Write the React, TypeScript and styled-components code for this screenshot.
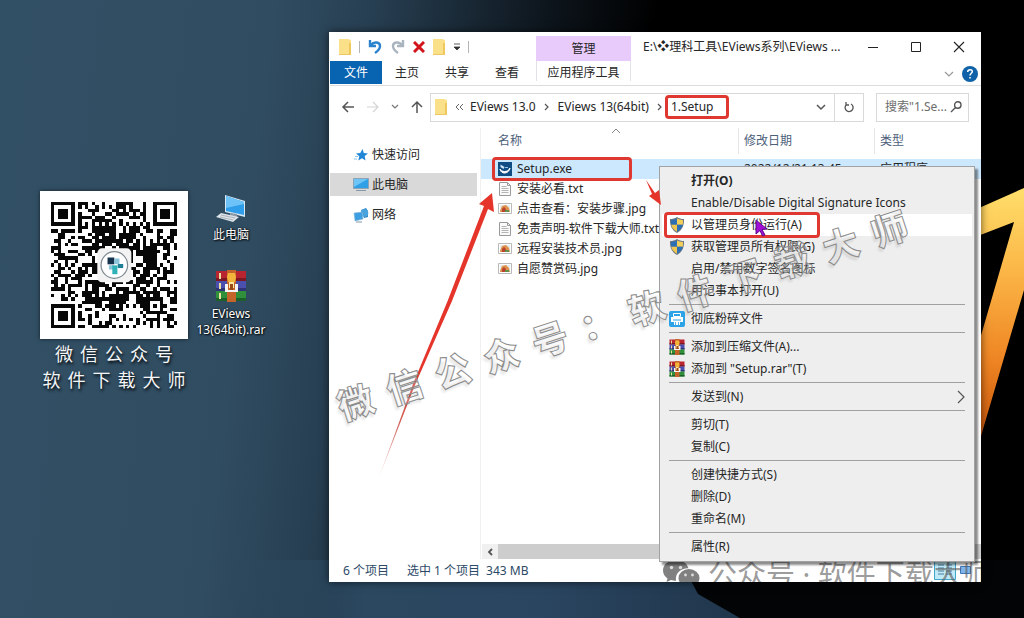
import React from "react";
import styled, { createGlobalStyle, css } from "styled-components";

const GlobalStyle = createGlobalStyle`
  * { box-sizing: border-box; }
  html, body, #root { height: 100%; }
  body {
    margin: 0;
    overflow: hidden;
    background: #000;
    font-family: "Noto Sans", "Noto Sans CJK SC", sans-serif;
    font-size: 12px;
    line-height: 16px;
    color: #262626;
  }
  button, input { font: inherit; color: inherit; }
  button { border: 0; padding: 0; background: none; text-align: left; }
`;

/* ---------- desktop ---------- */

const Desktop = styled.main`
  position: relative;
  height: 100vh;
  min-height: 600px;
  overflow: hidden;
  background: linear-gradient(97deg, #325065 0%, #304c61 25%, #273f52 34%, #0d151c 50%, #000 60%);
`;

const Wallpaper = styled.svg`
  position: absolute;
  inset: 0;
  width: 100%;
  height: 100%;
`;

const QrCard = styled.figure`
  position: absolute;
  left: 40px;
  top: 191px;
  width: 148px;
  margin: 0;
  display: flex;
  flex-direction: column;
  align-items: center;
  gap: 2px;
`;

const QrPaper = styled.div`
  padding: 11px;
  background: #fff;
  box-shadow: 0 0 4px rgba(0, 0, 0, 0.6);
  svg { display: block; width: 126px; height: 126px; }
`;

const Caption = styled.figcaption`
  display: flex;
  flex-direction: column;
  align-items: center;
  gap: 2px;
  font-family: "Noto Sans CJK SC", sans-serif;
  font-size: 18px;
  line-height: 24px;
  font-weight: 400;
  color: #f4f6f8;
  text-shadow: 1px 2px 3px #000;
`;

const Spread = styled.div<{ $gap: number }>`
  display: flex;
  gap: ${(p) => p.$gap}px;
`;

const Shortcut = styled.button<{ $top: number }>`
  position: absolute;
  left: 192px;
  top: ${(p) => p.$top}px;
  width: 78px;
  display: flex;
  flex-direction: column;
  align-items: center;
  gap: 4px;
  text-align: center;
  color: #fff;
  text-shadow: 1px 1px 2px #000, 0 0 2px #000;
`;

/* ---------- explorer window ---------- */

const Window = styled.section`
  position: absolute;
  left: 329px;
  right: 43px;
  top: 32px;
  bottom: 36px;
  display: flex;
  flex-direction: column;
  padding-left: 1px;
  background: #fff;
  box-shadow: 0 0 8px rgba(0, 0, 0, 0.6);
`;

const Ribbon = styled.header`
  display: flex;
  height: 54px;
  flex: none;
  border-bottom: 1px solid #dcdcdc;
`;

const RibbonLeft = styled.div`
  width: 206px;
  display: flex;
  flex-direction: column;
`;

const QuickBar = styled.div`
  height: 29px;
  display: flex;
  align-items: center;
  padding-left: 8px;
  gap: 7px;
  svg { display: block; }
`;

const Divider = styled.span`
  width: 1px;
  height: 12px;
  background: #b4b4b4;
`;

const Tabs = styled.nav`
  display: flex;
`;

const Tab = styled.button<{ $active?: boolean }>`
  width: ${(p) => (p.$active ? 52 : 50)}px;
  height: 23px;
  text-align: center;
  ${(p) => p.$active && css`background: #0863b1; color: #fff;`}
`;

const ToolTab = styled.div`
  width: 95px;
  display: flex;
  flex-direction: column;
  padding-top: 4px;
  text-align: center;
`;

const ToolGroup = styled.div`
  height: 25px;
  line-height: 25px;
  background: #e8cafb;
`;

const ToolName = styled.button`
  height: 20px;
  text-align: center;
  line-height: 24px;
  border: solid #e4e0e8;
  border-width: 0 1px;
`;

const RibbonRight = styled.div`
  flex: 1;
  display: flex;
  flex-direction: column;
`;

const TitleRow = styled.div`
  height: 30px;
  display: flex;
  align-items: center;
  justify-content: space-between;
  padding: 0 16px 0 12px;
`;

const WindowButtons = styled.div`
  display: flex;
  gap: 31px;
  svg { display: block; }
`;

const HelpRow = styled.div`
  display: flex;
  align-items: center;
  justify-content: flex-end;
  gap: 8px;
  padding: 4px 3px 0 0;
  svg { display: block; }
`;

const AddressRow = styled.div`
  flex: none;
  display: flex;
  align-items: center;
  height: 42px;
  padding: 0 12px 0 11px;
  svg { display: block; }
`;

const NavButtons = styled.div`
  width: 89px;
  display: flex;
  align-items: center;
  justify-content: space-between;
  padding-right: 6px;
`;

const Address = styled.div`
  flex: 1;
  height: 29px;
  display: flex;
  align-items: center;
  border: 1px solid #d9d9d9;
  padding-left: 3px;
`;

const Crumb = styled.a`
  position: relative;
  color: inherit;
  text-decoration: none;
  white-space: nowrap;
`;

const CrumbArrow = styled.span`
  width: 22px;
  display: flex;
  justify-content: center;
`;

const Spacer = styled.span`
  flex: 1;
`;

const Refresh = styled.button`
  width: 29px;
  height: 27px;
  margin-left: 8px;
  border-left: 1px solid #d9d9d9;
  display: flex;
  align-items: center;
  justify-content: center;
`;

const Search = styled.label`
  width: 93px;
  height: 29px;
  margin-left: 12px;
  display: flex;
  align-items: center;
  justify-content: space-between;
  border: 1px solid #d9d9d9;
  padding: 0 6px 0 8px;
  color: #6d6d6d;
`;

const SearchInput = styled.input`
  width: 64px;
  border: 0;
  padding: 0;
  outline: 0;
  background: none;
  &::placeholder { color: #6d6d6d; opacity: 1; }
`;

const Body = styled.div`
  flex: 1;
  min-height: 0;
  display: flex;
`;

const Sidebar = styled.nav`
  width: 151px;
  flex: none;
  display: flex;
  flex-direction: column;
  gap: 7px;
  padding: 15px 3px 0 0;
  border-right: 1px solid #f0f0f0;
`;

const Place = styled.button<{ $current?: boolean }>`
  height: 23px;
  display: flex;
  align-items: center;
  gap: 3px;
  padding-left: 23px;
  background: ${(p) => (p.$current ? "#d9d9d9" : "transparent")};
`;

const Listing = styled.div`
  position: relative;
  flex: 1;
  min-width: 0;
  display: flex;
  flex-direction: column;
  justify-content: space-between;
`;

const Files = styled.table`
  width: 100%;
  table-layout: fixed;
  border-collapse: collapse;
  th {
    height: 31px;
    padding: 0 0 10px 6px;
    vertical-align: bottom;
    font-weight: 400;
    text-align: left;
    color: #4c607a;
    background: linear-gradient(#e5e5e5, #e5e5e5) left 0 top 0 / 1px 26px no-repeat;
  }
  th:first-child { padding-left: 17px; background: none; }
  td { height: 20px; padding: 0 0 0 6px; white-space: nowrap; }
  td:first-child { padding-left: 17px; }
`;

const FileRow = styled.tr<{ $selected?: boolean }>`
  background: ${(p) => (p.$selected ? "#cce8ff" : "transparent")};
`;

const FileName = styled.span`
  position: relative;
  display: flex;
  align-items: center;
  gap: 5px;
  svg { display: block; flex: none; }
`;

const SortMark = styled.svg`
  position: absolute;
  left: 130px;
  top: 0;
`;

const ScrollBar = styled.div`
  display: flex;
  align-items: center;
  height: 15px;
  margin-left: 1px;
  background: #cdcdcd;
`;

const ScrollArrow = styled.button`
  width: 16px;
  height: 15px;
  background: #f0f0f0;
  display: flex;
  align-items: center;
  justify-content: center;
`;

const Status = styled.footer`
  position: relative;
  flex: none;
  height: 23px;
  display: flex;
  align-items: center;
  padding: 0 9px 0 13px;
  color: #2c4a66;
  overflow: hidden;
`;

const StatusItem = styled.span<{ $gap: number }>`
  margin-right: ${(p) => p.$gap}px;
`;

/* ---------- context menu ---------- */

const Menu = styled.div`
  position: absolute;
  left: 330px;
  top: 134px;
  width: 316px;
  padding: 3px 2px;
  background: #eee;
  border: 1px solid #a2a2a2;
  box-shadow: 3px 3px 2px rgba(0, 0, 0, 0.45);
`;

const MenuItem = styled.button<{ $hover?: boolean; $bold?: boolean }>`
  position: relative;
  width: 100%;
  height: 22px;
  display: flex;
  align-items: center;
  padding: 0 6px 0 7px;
  background: ${(p) => (p.$hover ? "#fff" : "transparent")};
  font-weight: ${(p) => (p.$bold ? 700 : 400)};
  svg { display: block; }
`;

const MenuIcon = styled.span`
  width: 22px;
`;

const MenuLine = styled.hr`
  height: 1px;
  margin: 2px 7px 3px;
  border: 0;
  background: #a0a0a0;
`;

/* ---------- annotations ---------- */

const Mark = styled.span<{ $inset: string }>`
  position: absolute;
  inset: ${(p) => p.$inset};
  border: 3px solid #df3830;
  border-radius: 4px;
  pointer-events: none;
`;

const Arrows = styled.svg`
  position: absolute;
  left: 0;
  top: 0;
  pointer-events: none;
`;

const Pointer = styled.svg`
  position: absolute;
  left: 93px;
  top: 5px;
`;

const Stamp = styled.div`
  position: absolute;
  left: 8px;
  top: 349px;
  display: flex;
  gap: 15px;
  transform: rotate(-18deg);
  transform-origin: 19px 19px;
  font-family: "Noto Sans CJK SC", sans-serif;
  font-weight: 900;
  font-size: 36px;
  line-height: 38px;
  color: rgba(255, 255, 255, 0.2);
  -webkit-text-stroke: 1px #8c8c8c;
  text-shadow: -3px 3px 2px rgba(0, 0, 0, 0.08);
  pointer-events: none;
`;

const Channel = styled.div`
  position: absolute;
  left: 332px;
  top: 1px;
  height: 28px;
  display: flex;
  align-items: center;
  gap: 8px;
  white-space: pre;
  font-size: 29px;
  line-height: 28px;
  color: rgba(90, 90, 90, 0.62);
`;

const ViewIcons = styled.svg`
  display: block;
`;

/* ---------- drawings ---------- */

const QR = 37;

function qrPath(): string {
  let seed = 20231;
  const rnd = () => {
    seed = (seed * 1103515245 + 12345) & 0x7fffffff;
    return (seed >> 8) / 0x7fffff;
  };
  const dense = [[15, 9, 4], [22, 11, 3], [12, 26, 4], [19, 29, 3], [28, 15, 3]];
  let d = "";
  for (let y = 0; y < QR; y++) {
    for (let x = 0; x < QR; x++) {
      const r = rnd();
      const cornerX = x < 8 ? 0 : x > 28 ? 30 : -1;
      const cornerY = y < 8 ? 0 : y > 28 ? 30 : -1;
      let on = r < 0.48;
      if (dense.some(([cx, cy, s]) => Math.hypot(x - cx, y - cy) < s)) on = r < 0.82;
      if (cornerX >= 0 && cornerY >= 0 && !(cornerX === 30 && cornerY === 30)) {
        const ring = Math.max(Math.abs(x - cornerX - 3), Math.abs(y - cornerY - 3));
        on = ring === 3 || ring < 2;
      } else if (Math.abs(x - 30) < 3 && Math.abs(y - 30) < 3) {
        const ring = Math.max(Math.abs(x - 30), Math.abs(y - 30));
        on = ring !== 1;
      } else if (x === 6 || y === 6) {
        on = (x + y) % 2 === 0;
      }
      if (Math.abs(x - 18) < 5 && Math.abs(y - 18) < 5) on = false;
      if (on) d += `M${x} ${y}h1v1h-1z`;
    }
  }
  return d;
}

const QrCode = () => (
  <svg viewBox="0 0 37 37" role="img" aria-label="QR">
    <path d={qrPath()} shapeRendering="crispEdges" fill="#080808" />
    <rect x="13.6" y="13.6" width="10" height="10" rx="1.4" fill="#f3f3f3" />
    <circle cx="18.6" cy="18.5" r="3.9" fill="#fff" stroke="#7d8a90" strokeWidth=".35" />
    <path d="M16.6 16.3h2v2h-2z" fill="#17344f" />
    <path d="M18.6 16.6h1.5v1.6h-1.5zM17 18.6h1.4v1.2H17z" fill="#8ac5dc" />
    <path d="M18 18.6h1.5v2.6H18z" fill="#2fb3b8" />
    <path d="M19.6 18.2h1.6v1.2h-1.6z" fill="#1e7f95" />
  </svg>
);

const Folder = () => (
  <svg width="14" height="16" viewBox="0 0 14 16">
    <path d="M1 0h9l3 1v15H1z" fill="#fbe08a" />
    <path d="M11 4h2v12h-2z" fill="#eec75d" />
    <path d="M1 15h12v1H1z" fill="#ecc763" />
  </svg>
);

const Rar = ({ size }: { size: number }) => (
  <svg width={size} height={size} viewBox="0 0 32 32">
    <path d="M1 1h30v10H1z" fill="#b8242f" />
    <path d="M1 8h30v3H1z" fill="#7d1822" />
    <path d="M1 11h30v10H1z" fill="#4b4fae" />
    <path d="M1 18h30v3H1z" fill="#313378" />
    <path d="M1 21h30v10H1z" fill="#2f8f3b" />
    <path d="M1 28h30v3H1z" fill="#1c6127" />
    <path d="M4 3h2v6H4zM4 13h2v6H4zM4 23h2v6H4z" fill="#e9dfa0" />
    <path d="M12 0h9v32h-9z" fill="#c4642a" />
    <path d="M13 3h7l1 4-1 5h-7l-1-5z" fill="#f2b43a" />
    <path d="M14 12h5v6h-5z" fill="#ffe9a0" />
    <path d="M10 14h3v6h7v-6h3v8H10z" fill="#f4f4f4" />
    <path d="M15 14h3v6h-3z" fill="#9a4a18" />
  </svg>
);

const DesktopPc = () => (
  <svg width="32" height="28" viewBox="0 0 32 28">
    <path d="M10 0l20 6v16l-20-5z" fill="#d5e8f4" />
    <path d="M11 1l18 6v13l-18-4z" fill="#2f9eea" />
    <path d="M11 1l18 6v2L11 13z" fill="#6dc2f8" />
    <path d="M15 18l7 1v3l-7-1z" fill="#8c9aa5" />
    <path d="M6 18l18 4-6 5L1 22z" fill="#dde3e8" />
    <path d="M6 20l14 3M5 22l13 3" stroke="#9aa7b0" strokeWidth=".8" />
  </svg>
);

const Shield = () => (
  <svg width="16" height="16" viewBox="0 0 16 16">
    <path d="M8 0c2 1.500 4.500 2 7 2 .3 6-1.500 11-7 14C2.500 13 .7 8 1 2c2.500 0 5-.5 7-2z" fill="#6b7683" />
    <path d="M8 1.600v6.200H2.200C2 6 2 4.500 2.100 3 4.400 2.900 6.400 2.500 8 1.600z" fill="#2c6fb4" />
    <path d="M8 1.600c1.600.9 3.600 1.300 5.900 1.400.1 1.500.1 3-.1 4.800H8z" fill="#f4cf5a" />
    <path d="M2.200 7.800H8v6.900c-3.400-1.900-5.200-4-5.800-6.900z" fill="#f0c64e" />
    <path d="M13.800 7.800H8v6.900c3.400-1.900 5.200-4 5.800-6.900z" fill="#2c6fb4" />
  </svg>
);

const Shredder = () => (
  <svg width="16" height="16" viewBox="0 0 16 16">
    <rect width="16" height="16" rx="2" fill="#2ba3e6" />
    <path d="M4.500 2.500h7v3h-7z" fill="none" stroke="#fff" />
    <path d="M2 6h12v5H2z" fill="#fff" />
    <path d="M4 8.500h8v1H4z" fill="#2ba3e6" />
    <path d="M5 10h6v4H5z" fill="#fff" />
    <path d="M6.500 11v3M9.500 11v3" stroke="#2ba3e6" strokeWidth=".8" />
  </svg>
);

const SetupIcon = () => (
  <svg width="14" height="14" viewBox="0 0 14 14">
    <path d="M0 0h14v14H0z" fill="#0f4c84" />
    <path d="M2 7c1 3 8 4 10-1-1 6-9 7-10 1z" fill="#fff" stroke="#fff" />
    <path d="M2.500 2.500l4 2.500-1 2-3-2z" fill="#cfe6f7" />
    <path d="M7 5h3v1H7z" fill="#8fc3e8" />
  </svg>
);

const TextIcon = () => (
  <svg width="14" height="14" viewBox="0 0 14 14">
    <path d="M1.500.5h8l3 3v10h-11z" fill="#fafafa" stroke="#9a9a9a" />
    <path d="M9.500.5v3h3" fill="none" stroke="#9a9a9a" />
    <path d="M3.500 4.500h5M3.500 6.500h7M3.500 8.500h7M3.500 10.500h7" stroke="#b4b4b4" />
  </svg>
);

const ImageIcon = () => (
  <svg width="14" height="14" viewBox="0 0 14 14">
    <path d="M.5 1.500h13v10H.5z" fill="#fff" stroke="#b9b9b9" />
    <path d="M2 3h10v7H2z" fill="#e4edf0" />
    <path d="M2 9l2-5 4-1 3 3 1 4H2z" fill="#e0914e" />
    <path d="M4 7l2-2 2 2v3H4z" fill="#b8432f" />
    <path d="M7 8h4v2H7z" fill="#62904a" />
  </svg>
);

const Star = () => (
  <svg width="16" height="16" viewBox="0 0 16 16">
    <path d="M9.500 2l1.300 4 4.200.4-3.300 2.700.8 4.400-3.500-2.300-3.700 2.300 1-4.200L3 6.500l4.300-.4z" fill="#1f87d6" />
    <path d="M2 9.500h3M1 12h3" stroke="#8ec3ea" />
  </svg>
);

const SmallPc = () => (
  <svg width="16" height="16" viewBox="0 0 16 16">
    <path d="M.5 1.500h15v10H.5z" fill="#2f9fe6" stroke="#8ba3b4" />
    <path d="M1 2h14L1 10z" fill="#6cc4f7" />
    <path d="M3 13h10v1H3z" fill="#8799a6" />
  </svg>
);

const Network = () => (
  <svg width="16" height="16" viewBox="0 0 16 16">
    <path d="M8 3l5-2 2 3v6l-4 1z" fill="#2e86c9" />
    <circle cx="11.500" cy="6" r="3.800" fill="#4ba3dd" />
    <path d="M1 6l8-1 1 7-8 2z" fill="#3d9fe2" stroke="#8cb7d6" strokeWidth=".6" />
    <path d="M3 14.500h6v1H3z" fill="#8799a6" />
  </svg>
);

type StrokeProps = { w: number; h: number; d: string; color?: string; width?: number };
const Line = ({ w, h, d, color = "#555", width = 1.2 }: StrokeProps) => (
  <svg width={w} height={h} viewBox={`0 0 ${w} ${h}`} fill="none" stroke={color} strokeWidth={width}>
    <path d={d} />
  </svg>
);

const WeChat = () => (
  <svg width="38" height="30" viewBox="0 0 38 30">
    <path d="M14 1C6.500 1 1 5.500 1 11.500c0 3.300 1.700 6 4.500 8L4.500 23l4.500-2c1.500.5 3 .8 5 .8C13 14 19 9 26.500 9.300 25 4 20 1 14 1z" fill="#808080" />
    <ellipse cx="27" cy="19" rx="10.500" ry="9" fill="#808080" />
    <path d="M31 26l3 3-6-1z" fill="#808080" />
    <g fill="#ddd">
      <circle cx="9.500" cy="8.500" r="1.700" />
      <circle cx="18.500" cy="8.500" r="1.700" />
      <circle cx="23.500" cy="16" r="1.400" />
      <circle cx="30.500" cy="16" r="1.400" />
    </g>
  </svg>
);

/* ---------- data ---------- */

type Entry = { name: string; icon: React.ReactNode; date?: string; type?: string };
const files: Entry[] = [
  { name: "Setup.exe", icon: <SetupIcon />, date: "2022/12/21 13:45", type: "应用程序" },
  { name: "安装必看.txt", icon: <TextIcon /> },
  { name: "点击查看：安装步骤.jpg", icon: <ImageIcon /> },
  { name: "免责声明-软件下载大师.txt", icon: <TextIcon /> },
  { name: "远程安装技术员.jpg", icon: <ImageIcon /> },
  { name: "自愿赞赏码.jpg", icon: <ImageIcon /> },
];

type Action = { label: string; icon?: React.ReactNode; bold?: boolean; hover?: boolean; sub?: boolean };
const menu: Action[][] = [
  [
    { label: "打开(O)", bold: true },
    { label: "Enable/Disable Digital Signature Icons" },
    { label: "以管理员身份运行(A)", icon: <Shield />, hover: true },
    { label: "获取管理员所有权限(G)", icon: <Shield /> },
    { label: "启用/禁用数字签名图标" },
    { label: "用记事本打开(U)" },
  ],
  [{ label: "彻底粉碎文件", icon: <Shredder /> }],
  [
    { label: "添加到压缩文件(A)...", icon: <Rar size={16} /> },
    { label: '添加到 "Setup.rar"(T)', icon: <Rar size={16} /> },
  ],
  [{ label: "发送到(N)", sub: true }],
  [{ label: "剪切(T)" }, { label: "复制(C)" }],
  [{ label: "创建快捷方式(S)" }, { label: "删除(D)" }, { label: "重命名(M)" }],
  [{ label: "属性(R)" }],
];

const Letters = ({ text, gap }: { text: string; gap: number }) => (
  <Spread $gap={gap}>
    {[...text].map((c, i) => (
      <span key={i}>{c}</span>
    ))}
  </Spread>
);

export default function App() {
  return (
    <>
      <GlobalStyle />
      <Desktop>
        <Wallpaper viewBox="0 0 1024 618" preserveAspectRatio="xMaxYMax slice">
          <defs>
            <linearGradient id="gold" x1="0" y1="0" x2="0" y2="1">
              <stop offset="0" stopColor="#ffdf6a" />
              <stop offset=".35" stopColor="#fbb445" />
              <stop offset=".7" stopColor="#ee8423" />
              <stop offset="1" stopColor="#c9560c" />
            </linearGradient>
            <linearGradient id="floor" x1="0" y1="0" x2="1" y2="0">
              <stop offset="0" stopColor="#2d4a60" stopOpacity="0" />
              <stop offset=".25" stopColor="#2b4860" />
              <stop offset=".6" stopColor="#2a4560" />
              <stop offset="1" stopColor="#20364b" />
            </linearGradient>
          </defs>
          <path d="M240 560h440l22 32 38 26H240z" fill="url(#floor)" />
          <path d="M680 560h344v58H740l-42-24z" fill="#030406" />
          <path d="M970 212l54-24v102l-43 146h-11V370l12-38 32-110-44 17z" fill="url(#gold)" />
        </Wallpaper>

        <QrCard>
          <QrPaper>
            <QrCode />
          </QrPaper>
          <Caption>
            <Letters text="微信公众号" gap={7} />
            <Letters text="软件下载大师" gap={7} />
          </Caption>
        </QrCard>

        <Shortcut $top={195}>
          <DesktopPc />
          此电脑
        </Shortcut>
        <Shortcut $top={270}>
          <Rar size={32} />
          <span>EViews 13(64bit).rar</span>
        </Shortcut>

        <Window>
          <Ribbon>
            <RibbonLeft>
              <QuickBar>
                <Folder />
                <Divider />
                <Line w={16} h={16} d="M3 1v6h6M4 6c3-4 9-3 9 1 0 3-2 5-5 7" color="#2b83cf" width={2.4} />
                <Line w={16} h={16} d="M13 1v6H7M12 6C9 2 3 3 3 7c0 3 2 5 5 7" color="#aab4bf" width={2.4} />
                <Line w={12} h={12} d="M1 1l10 10M11 1L1 11" color="#d2141d" width={3} />
                <Folder />
                <svg width="8" height="8" viewBox="0 0 8 8">
                  <path d="M1 1h6M1 4h6L4 7z" stroke="#333" strokeWidth=".8" fill="#333" />
                </svg>
                <Divider />
              </QuickBar>
              <Tabs>
                <Tab $active>文件</Tab>
                <Tab>主页</Tab>
                <Tab>共享</Tab>
                <Tab>查看</Tab>
              </Tabs>
            </RibbonLeft>
            <ToolTab>
              <ToolGroup>管理</ToolGroup>
              <ToolName>应用程序工具</ToolName>
            </ToolTab>
            <RibbonRight>
              <TitleRow>
                <span>E:\❖理科工具\EViews系列\EViews ...</span>
                <WindowButtons>
                  <button aria-label="最小化"><Line w={12} h={12} d="M1 6.500h10" color="#222" width={1} /></button>
                  <button aria-label="最大化"><Line w={12} h={12} d="M1.500 1.500h9v9h-9z" color="#222" width={1} /></button>
                  <button aria-label="关闭"><Line w={12} h={12} d="M1 1l10 10M11 1L1 11" color="#222" width={1.1} /></button>
                </WindowButtons>
              </TitleRow>
              <HelpRow>
                <Line w={10} h={8} d="M1 2l4 4 4-4" color="#999" />
                <svg width="16" height="16" viewBox="0 0 16 16">
                  <circle cx="8" cy="8" r="8" fill="#0f62a8" />
                  <path d="M5.700 6c0-3.200 4.800-3 4.600-.3C10.200 7.300 8 7.400 8 9.600M8 11v1.600" fill="none" stroke="#fff" strokeWidth="1.500" />
                </svg>
              </HelpRow>
            </RibbonRight>
          </Ribbon>

          <AddressRow>
            <NavButtons>
              <Line w={14} h={14} d="M13 7H2M7 2L2 7l5 5" color="#555" width={1.5} />
              <Line w={14} h={14} d="M1 7h11M7 2l5 5-5 5" color="#d4d4d4" />
              <Line w={8} h={8} d="M1 2l3 3 3-3" color="#777" />
              <Line w={14} h={14} d="M7 13V2M2 7l5-5 5 5" color="#555" width={1.5} />
            </NavButtons>
            <Address>
              <Folder />
              <CrumbArrow>
                <Line w={8} h={8} d="M4 1L1 4l3 3M8 1L5 4l3 3" color="#666" width={1} />
              </CrumbArrow>
              <Crumb href="#13">EViews 13.0</Crumb>
              <CrumbArrow>
                <Line w={6} h={8} d="M1 1l3 3-3 3" />
              </CrumbArrow>
              <Crumb href="#64">EViews 13(64bit)</Crumb>
              <CrumbArrow>
                <Line w={6} h={8} d="M1 1l3 3-3 3" />
              </CrumbArrow>
              <Crumb href="#setup">
                1.Setup
                <Mark $inset="-4px -16px -4px -6px" />
              </Crumb>
              <Spacer />
              <Line w={10} h={8} d="M1 2l4 4 4-4" width={1.5} />
              <Refresh aria-label="刷新">
                <Line w={12} h={12} d="M3 4a4 4 0 1 0 5-1M3 1v3h3" width={1.3} />
              </Refresh>
            </Address>
            <Search>
              <SearchInput placeholder={'搜索"1.Se...'} aria-label="搜索" />
              <Line w={12} h={12} d="M11 4a3.200 3.200 0 1 1-6.400 0a3.200 3.200 0 1 1 6.400 0M5.500 6.500L1 11" width={1.4} />
            </Search>
          </AddressRow>

          <Body>
            <Sidebar>
              <Place><Star />快速访问</Place>
              <Place $current><SmallPc />此电脑</Place>
              <Place><Network />网络</Place>
            </Sidebar>
            <Listing>
              <SortMark width="10" height="6" viewBox="0 0 10 6">
                <path d="M1 5l4-4 4 4" fill="none" stroke="#888" />
              </SortMark>
              <Files>
                <colgroup>
                  <col style={{ width: 257 }} />
                  <col style={{ width: 136 }} />
                  <col />
                </colgroup>
                <thead>
                  <tr>
                    <th>名称</th>
                    <th>修改日期</th>
                    <th>类型</th>
                  </tr>
                </thead>
                <tbody>
                  {files.map((f, i) => (
                    <FileRow key={f.name} $selected={i === 0}>
                      <td>
                        <FileName>
                          {f.icon}
                          {f.name}
                          {i === 0 && <Mark $inset="-4px 106px -4px -6px" />}
                        </FileName>
                      </td>
                      <td>{f.date}</td>
                      <td>{f.type}</td>
                    </FileRow>
                  ))}
                </tbody>
              </Files>
              <ScrollBar>
                <ScrollArrow aria-label="向左滚动">
                  <Line w={8} h={8} d="M6 1L3 4l3 3" width={1.8} />
                </ScrollArrow>
              </ScrollBar>
            </Listing>
          </Body>

          <Status>
            <StatusItem $gap={18}>6 个项目</StatusItem>
            <StatusItem $gap={6}>选中 1 个项目</StatusItem>
            <StatusItem $gap={0}>343 MB</StatusItem>
            <Spacer />
            <ViewIcons width="38" height="19" viewBox="0 0 38 19">
              <path d="M.5.5h21v18H.5z" fill="#bfe9f7" stroke="#3fa7cc" />
              <path d="M4 4h6M4 7h6M4 10h6M4 13h6M12 4h6M12 7h6M12 10h6M12 13h6" stroke="#4b7f9c" />
              <path d="M26.500 5.500h10v7h-10z" fill="#7fb4e8" stroke="#3f75b8" />
            </ViewIcons>
            <Channel>
              <WeChat />
              公众号 · 软件下载大师
            </Channel>
          </Status>

          <Menu role="menu">
            {menu.map((group, g) => (
              <React.Fragment key={g}>
                {g > 0 && <MenuLine />}
                {group.map((a) => (
                  <MenuItem key={a.label} role="menuitem" $hover={a.hover} $bold={a.bold}>
                    <MenuIcon>{a.icon}</MenuIcon>
                    {a.label}
                    {a.sub && (
                      <>
                        <Spacer />
                        <Line w={9} h={14} d="M1 1l6 6-6 6" />
                      </>
                    )}
                    {a.hover && (
                      <>
                        <Mark $inset="-2px 152px -2px 2px" />
                        <Pointer width="14" height="18" viewBox="0 0 14 18">
                          <path d="M1 1l11 9-5 .5 3 5.500-2.500 1-2.500-5.500L1 15z" fill="#a10fd6" stroke="#5d0a86" />
                        </Pointer>
                      </>
                    )}
                  </MenuItem>
                ))}
              </React.Fragment>
            ))}
          </Menu>

          <Arrows width="345" height="450" viewBox="0 0 345 450">
            <defs>
              <linearGradient id="fade" x1="0" y1="1" x2="0" y2="0">
                <stop offset="0" stopColor="#c8463e" stopOpacity=".1" />
                <stop offset=".2" stopColor="#c8463e" stopOpacity=".85" />
                <stop offset=".4" stopColor="#e5352b" />
              </linearGradient>
            </defs>
            <path d="M49 448L84 352 119 268 155 174l-5-2 13-11 2 19-6-3L123 269 86 353z" fill="url(#fade)" />
            <path d="M317 148l9 13 4-3 2 15-12-9 3-2z" fill="#e5352b" />
          </Arrows>
          <Stamp>
            {[..."微信公众号：软件下载大师"].map((c, i) => (
              <span key={i}>{c}</span>
            ))}
          </Stamp>
        </Window>
      </Desktop>
    </>
  );
}
